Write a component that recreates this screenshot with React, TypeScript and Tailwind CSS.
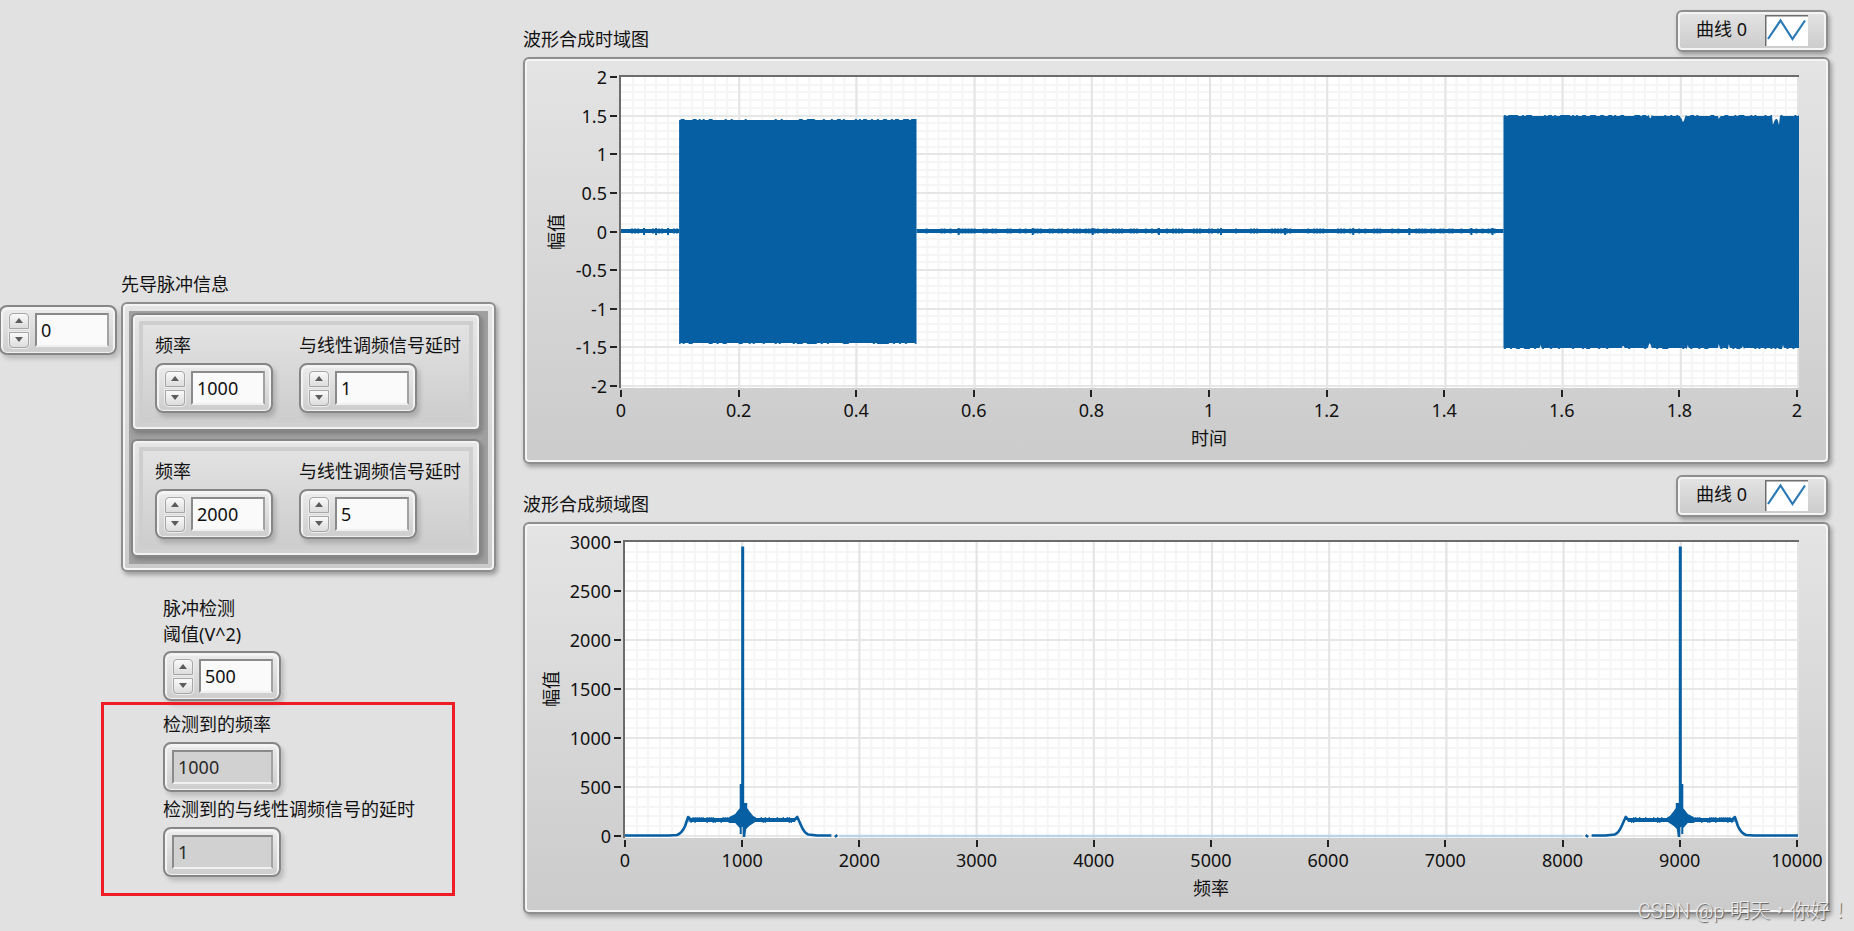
import React, { useId, useState } from 'react';

const FRAME =
  'border-2 border-[#8e8e8e] rounded-md bg-linear-to-b from-[#e4e4e4] to-[#cbcbcb] shadow-[inset_0_0_0_2px_#f4f4f4,2px_3px_4px_rgba(0,0,0,0.3)]';
const CONTROL =
  'h-[50px] w-[118px] border-2 border-[#868686] rounded-lg bg-linear-to-b from-[#ececec] to-[#cdcdcd] shadow-[inset_0_1px_1px_2px_#f4f4f4,3px_4px_4px_rgba(0,0,0,0.16)]';
const BOX =
  'h-[34px] border-t-2 border-l-2 border-r-2 border-b-2 border-t-[#8a8a8a] border-l-[#8a8a8a] border-r-[#a2a2a2] border-b-[#f0f0f0] pl-1 outline-none';
const STEP =
  'flex h-[16px] w-[20px] items-center justify-center border border-[#a6a6a6] bg-linear-to-b from-[#fafafa] to-[#dcdcdc] shadow-[0_0_0_1px_#ececec]';

interface NumericProps {
  initial: number;
  id?: string;
  name?: string;
}

const Numeric: React.FC<NumericProps> = ({ initial, id, name }) => {
  const [value, setValue] = useState(String(initial));
  const step = (d: number) => setValue(String((Number(value) || 0) + d));

  return (
    <div className={`flex items-center gap-1.5 pl-2 ${CONTROL}`}>
      <div className="flex flex-col gap-[3px]">
        <button type="button" aria-label="增加" onClick={() => step(1)} className={`rounded-t ${STEP}`}>
          <svg width="8" height="5" viewBox="0 0 8 5"><path d="M0 5 L4 0 L8 5 Z" fill="#5c5c5c" /></svg>
        </button>
        <button type="button" aria-label="减少" onClick={() => step(-1)} className={`rounded-b ${STEP}`}>
          <svg width="8" height="5" viewBox="0 0 8 5"><path d="M0 0 L8 0 L4 5 Z" fill="#5c5c5c" /></svg>
        </button>
      </div>
      <input
        id={id}
        aria-label={name}
        inputMode="numeric"
        value={value}
        onChange={(e) => setValue(e.target.value)}
        className={`w-[74px] bg-[#fafafa] ${BOX}`}
      />
    </div>
  );
};

const Indicator: React.FC<{ value: string; id: string }> = ({ value, id }) => (
  <div className={`flex items-center pl-[7px] ${CONTROL}`}>
    <input id={id} readOnly value={value} className={`w-[101px] bg-[#d1d1d1] text-[#2a2a2a] ${BOX}`} />
  </div>
);

const LabeledNumeric: React.FC<{ label: string; initial: number }> = ({ label, initial }) => {
  const id = useId();
  return (
    <div className="w-[118px]">
      <label htmlFor={id} className="mb-[5px] block whitespace-nowrap">{label}</label>
      <Numeric id={id} initial={initial} />
    </div>
  );
};

const PulseCluster: React.FC<{ freq: number; delay: number }> = ({ freq, delay }) => (
  <div className="rounded-md border-2 border-[#868686] bg-linear-to-b from-[#e6e6e6] to-[#d0d0d0] p-1.5 shadow-[inset_0_0_0_2px_#f2f2f2,2px_3px_4px_rgba(0,0,0,0.2)]">
    <div className="flex gap-[26px] border-4 border-[#cecece] bg-linear-to-b from-[#e2e2e2] to-[#cdcdcd] pt-[7px] pb-1.5 pl-3">
      <LabeledNumeric label="频率" initial={freq} />
      <LabeledNumeric label="与线性调频信号延时" initial={delay} />
    </div>
  </div>
);

// Repeatable noise in 0..1
const noise = (i: number) => {
  const v = Math.sin(i * 12.9898) * 43758.5453;
  return v - Math.floor(v);
};

// Filled envelope of a dense burst, one point per pixel
const burst = (x0: number, x1: number, top: number, bottom: number, dips: Record<number, number> = {}, rises: Record<number, number> = {}) => {
  const up: string[] = [];
  const down: string[] = [];
  for (let x = x0; x <= x1; x++) {
    const t = noise(Math.floor(x / 2)) > 0.6 ? 1 : 0;
    const b = noise(Math.floor(x / 2) + 500) > 0.65 ? 1 : 0;
    up.push(`${x},${top - t + (dips[x] ?? 0)}`);
    down.unshift(`${x},${bottom + b - (rises[x] ?? 0)}`);
  }
  return [...up, ...down].join(' ');
};

const DIPS = { 1027: 3, 1028: 3, 1058: 3, 1059: 4, 1060: 6, 1061: 5, 1062: 3, 1096: 4, 1097: 2, 1150: 9, 1151: 6, 1152: 4, 1153: 3, 1154: 4, 1155: 6, 1156: 9 };
const RISES = { 918: 3, 1000: 3, 1001: 3, 1026: 3, 1027: 5, 1028: 3, 1065: 4, 1096: 4, 1106: 4, 1120: 3, 1160: 3 };

const TimeTrace: React.FC = () => (
  <g fill="#075fa3">
    <rect x="0" y="152" width="58" height="4" />
    <rect x="295" y="152" width="586" height="4" />
    {[22, 34, 46, 336, 410, 470, 536, 598, 662, 730, 786, 848, 869].map((x) => (
      <rect key={x} x={x} y="151" width="2" height="7" />
    ))}
    {Array.from({ length: 290 }, (_, i) => i * 3 + 4)
      .filter((x) => (x < 58 || x > 297) && noise(x) > 0.5)
      .map((x) => (
        <rect key={x} x={x} y="151" width="2" height="6" opacity="0.5" />
      ))}
    <polygon points={burst(58, 295, 43, 266)} />
    <polygon points={burst(881, 1176, 39, 271, DIPS, RISES)} />
  </g>
);

const Hump: React.FC = () => {
  const ripple: string[] = [];
  for (let x = 64; x < 170; x += 2) {
    ripple.push(`M${x} ${275 + Math.round(noise(x))}V${280 + Math.round(noise(x + 90) * 0.6)}`);
  }
  return (
    <g stroke="#075fa3" fill="none">
      <path strokeWidth="2.6" strokeLinejoin="round" d="M0 293.5 H44 L52 293 Q57 291 60 284 L63 275 L66 278 M169 278 L172 275 L176 284 Q179 291 183 292.5 L192 293.5 H206" />
      <path strokeWidth="2.4" d="M209.5 295 L212 293" />
      <path strokeWidth="4" d="M65 278 H170" />
      <path strokeWidth="1.2" d={ripple.join('')} />
      <path fill="#075fa3" stroke="none" d="M104 275 L110 272 L113 268 L115 266 V261 H122 V266 L124 269 L128 274 L130 275 V280 L124 284 L121 287 L120 295 H117.500 V285 H116.500 V292 H114.500 V286 L110 281 L104 281 Z" />
      <path strokeWidth="3" d="M117.500 4.500 V284" />
      <path strokeWidth="3" d="M116 242 V270" />
    </g>
  );
};

const FreqTrace: React.FC = () => (
  <g>
    <path d="M214 294 H956" stroke="#bdd4e7" strokeWidth="2.4" />
    <Hump />
    <g transform="translate(1171 0) scale(-1 1)"><Hump /></g>
  </g>
);

interface GridProps {
  cols: number;
  rows: number;
  colMinor: number;
  rowMinor: number;
  span: [number, number];
}

const Grid: React.FC<GridProps> = ({ cols, rows, colMinor, rowMinor, span }) => {
  const [w, h] = span;
  const xs = Array.from({ length: cols * colMinor }, (_, i) => i + 1);
  const ys = Array.from({ length: rows * rowMinor }, (_, i) => i + 1);
  const vx = (i: number) => Math.round((i * w) / (cols * colMinor));
  const hy = (i: number) => Math.round((i * h) / (rows * rowMinor));
  return (
    <g strokeWidth="2">
      <path stroke="#f5f5f5" d={xs.map((i) => `M${vx(i)} 0V${h + 3}`).join('')} />
      <path stroke="#f5f5f5" d={ys.map((i) => `M0 ${hy(i)}H${w + 3}`).join('')} />
      <path stroke="#e4e4e4" d={xs.filter((i) => i % colMinor === 0).map((i) => `M${vx(i)} 0V${h + 3}`).join('')} />
      <path stroke="#e6e6e6" d={ys.filter((i) => i % rowMinor === 0).map((i) => `M0 ${hy(i)}H${w + 3}`).join('')} />
    </g>
  );
};

const Legend: React.FC = () => (
  <div className={`mr-[2px] flex h-[42px] w-[152px] items-start justify-between pt-[3px] pr-[18px] pl-[18px] ${FRAME}`}>
    <span className="leading-[29px]">曲线 0</span>
    <svg width="43" height="31" viewBox="0 0 43 31">
      <rect width="43" height="31" fill="#fff" />
      <path d="M0.500 31 V0.500 H43" fill="none" stroke="#6e6e6e" strokeWidth="2" />
      <path d="M3 24 L15.500 5.500 L27.500 24 L40 5.500" fill="none" stroke="#2b7ab6" strokeWidth="2.2" />
    </svg>
  </div>
);

interface GraphProps {
  title: string;
  xTitle: string;
  xTicks: string[];
  yTicks: string[];
  axisClass: string;
  tickClass: string;
  heightClass: string;
  viewBox: string;
  children: React.ReactNode;
}

const Graph: React.FC<GraphProps> = ({ title, xTitle, xTicks, yTicks, axisClass, tickClass, heightClass, viewBox, children }) => (
  <section>
    <div className="mb-[5px] flex items-end justify-between">
      <h2>{title}</h2>
      <Legend />
    </div>
    <div className={`flex pt-4 pr-[29px] pb-[11px] ${FRAME}`}>
      <div className={`flex w-7 items-center justify-center ${axisClass} ${heightClass}`}>
        <span className="rotate-180 [text-orientation:sideways] [writing-mode:vertical-rl]">幅值</span>
      </div>
      <div className={`flex flex-col justify-between py-0.5 pr-[2px] ${tickClass} ${heightClass}`}>
        {yTicks.map((t) => (
          <div key={t} className="flex h-0 items-center justify-end gap-[3px]">
            <span>{t}</span>
            <span className="h-0.5 w-[7px] bg-[#222]" />
          </div>
        ))}
      </div>
      <div className="min-w-0 flex-1">
        <div className={`border-t-2 border-l-2 border-[#6c6c6c] bg-white ${heightClass}`}>
          <svg className="block h-full w-full" viewBox={viewBox} preserveAspectRatio="none">
            {children}
          </svg>
        </div>
        <div className="mt-0.5 flex justify-between pr-0.5 pl-0.5">
          {xTicks.map((t) => (
            <div key={t} className="flex w-0 flex-col items-center">
              <span className="h-[7px] w-0.5 bg-[#222]" />
              <span>{t}</span>
            </div>
          ))}
        </div>
        <div className="mt-0.5 text-center">{xTitle}</div>
      </div>
    </div>
  </section>
);

const App: React.FC = () => (
  <main className="relative flex min-h-screen overflow-hidden bg-[#e1e1e1] font-['Noto_Sans','Noto_Sans_CJK_SC',sans-serif] text-[18px] leading-[26px] text-[#111]">
    <div className="w-[523px] shrink-0 pt-[271px]">
      <div className="flex items-start gap-1">
        <div className="mt-[34px] -ml-px">
          <Numeric initial={0} name="索引" />
        </div>
        <section className="w-[375px]">
          <h2 className="mb-[5px]">先导脉冲信息</h2>
          <div className={`px-1.5 pt-[7px] pb-1.5 ${FRAME}`}>
            <div className="flex flex-col gap-2 bg-[#a0a0a0] pt-0.5 pr-[7px] pb-[7px] pl-0.5">
              <PulseCluster freq={1000} delay={1} />
              <PulseCluster freq={2000} delay={5} />
            </div>
          </div>
        </section>
      </div>

      <div className="mt-[23px] ml-[163px]">
        <label htmlFor="threshold" className="mb-1 block">
          脉冲检测
          <br />
          阈值(V^2)
        </label>
        <Numeric id="threshold" initial={500} />
      </div>

      <section className="mt-px ml-[101px] w-[354px] border-[3px] border-[#ee1c25] pt-1.5 pb-4 pl-[59px]">
        <label htmlFor="found-freq" className="mb-[5px] block">检测到的频率</label>
        <Indicator id="found-freq" value="1000" />
        <label htmlFor="found-delay" className="my-[5px] -mt-px block pt-[5px]">检测到的与线性调频信号的延时</label>
        <Indicator id="found-delay" value="1" />
      </section>
    </div>

    <div className="flex min-w-0 flex-1 flex-col gap-[11px] pt-2.5 pr-6">
      <Graph
        title="波形合成时域图"
        xTitle="时间"
        xTicks={['0', '0.2', '0.4', '0.6', '0.8', '1', '1.2', '1.4', '1.6', '1.8', '2']}
        yTicks={['2', '1.5', '1', '0.5', '0', '-0.5', '-1', '-1.5', '-2']}
        axisClass="ml-[17px]"
        tickClass="w-[49px]"
        heightClass="h-[313px]"
        viewBox="0 0 1176 311"
      >
        <Grid cols={10} rows={8} colMinor={10} rowMinor={5} span={[1175, 309]} />
        <TimeTrace />
      </Graph>
      <Graph
        title="波形合成频域图"
        xTitle="频率"
        xTicks={['0', '1000', '2000', '3000', '4000', '5000', '6000', '7000', '8000', '9000', '10000']}
        yTicks={['3000', '2500', '2000', '1500', '1000', '500', '0']}
        axisClass="ml-3"
        tickClass="w-[58px]"
        heightClass="h-[298px]"
        viewBox="0 0 1172 296"
      >
        <Grid cols={10} rows={6} colMinor={10} rowMinor={5} span={[1171, 294]} />
        <FreqTrace />
      </Graph>
    </div>

    <div className="absolute right-1 bottom-[7px] font-['Roboto','Noto_Sans_CJK_TC',sans-serif] text-[20px] font-light text-[#ececec] [text-shadow:1px_1px_1px_#555]">
      CSDN @p-明天，你好！
    </div>
  </main>
);

export default App;
